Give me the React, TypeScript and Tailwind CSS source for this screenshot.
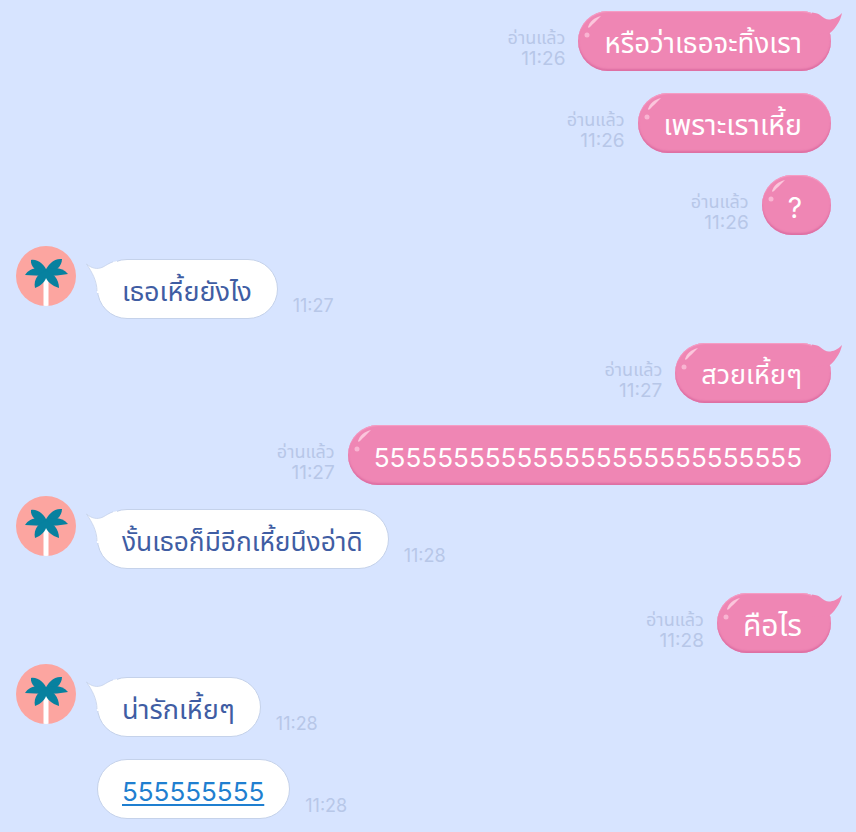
import React from 'react';

const FONT = "font-['Inter','Noto_Sans','Noto_Sans_Thai','DejaVu_Sans',sans-serif]";

const Avatar = () => (
  <svg width="60" height="60" viewBox="0 0 60 60" className="shrink-0">
    <clipPath id="palm-clip">
      <circle cx="30" cy="30" r="30" />
    </clipPath>
    <circle cx="30" cy="30" r="30" fill="#fca5a0" />
    <rect x="27.5" y="30" width="5" height="30" fill="#ffffff" clipPath="url(#palm-clip)" />
    <g fill="#07819f">
      <path d="M32 27 C28 18 22 13 15 14 C14 21 22 28 32 27 Z" />
      <path d="M28 27 C32 18 38 12 46 13 C46 21 38 28 28 27 Z" />
      <path d="M31 26 C24 20 14 21 9 29 C15 29 23 30 30 30 Z" />
      <path d="M29 26 C36 20 46 21 52 28 C45 29 37 30 30 30 Z" />
      <path d="M31 25 C23 26 17 33 19 42 C25 40 30 35 31 29 Z" />
      <path d="M29 25 C37 26 43 33 43 42 C36 40 30 35 29 29 Z" />
    </g>
  </svg>
);

const RightTail = () => (
  <svg width="30" height="24" viewBox="0 0 30 24" className="absolute right-[-11px] top-0">
    <path d="M0 1.500 C4 2 7 3 8 4 C11 6.500 14 8.500 17 8.500 C21 8.500 26 6.500 30 2 C29 8 25 16 18 22 L0 24 Z" fill="#ef86b4" />
  </svg>
);

const LeftTail = () => (
  <svg width="34" height="34" viewBox="0 0 34 34" className="absolute left-[-12px] top-[-1px]">
    <path d="M0.500 5 C5 9 11 11 17 8 C21 6 25 3 31 2 L34 34 L11 34 C11 22 6 13 0.500 5 Z" fill="#ffffff" />
    <path d="M0.500 5 C5 9 11 11 17 8 C20 6.500 23 4 27 2.800" fill="none" stroke="#c5d2ea" strokeWidth="0.8" />
    <path d="M0.500 5 C6 13 11 22 11 32" fill="none" stroke="#c5d2ea" strokeWidth="0.8" />
  </svg>
);

const Gloss = () => (
  <svg width="30" height="32" viewBox="0 0 30 32" className="absolute left-0 top-0">
    <path d="M10 16 C12 10 16 7 23 5 C19 9 15 13 12 16 C11 17 10 17 10 16 Z" fill="#fbc6dc" />
    <circle cx="9" cy="24" r="2.500" fill="#f9b4d2" />
  </svg>
);

const Sent = ({ text, time, tail, mt, size }: { text: string; time: string; tail?: boolean; mt: string; size: string }) => (
  <div className={`flex items-end justify-end pr-[25px] ${mt}`}>
    <div className="mb-[2px] mr-[13px] text-right text-[19px] leading-[21px] text-[#b7c7e8]">
      <div className="text-[18px]">อ่านแล้ว</div>
      <div>{time}</div>
    </div>
    <div className={`relative flex h-[60px] items-center rounded-[30px] bg-[#ef86b4] pl-[26px] pr-[29px] text-white shadow-[inset_0_-2px_2px_#dd6fa3,inset_0_1px_1px_#f6a0c6] ${size}`}>
      {tail && <RightTail />}
      <Gloss />
      <span className="relative pt-[5px]">{text}</span>
    </div>
  </div>
);

const Received = ({
  text,
  time,
  avatar,
  link,
  mt,
  size,
}: {
  text: string;
  time: string;
  avatar?: boolean;
  link?: boolean;
  mt: string;
  size: string;
}) => (
  <div className={`flex items-end pl-[16px] ${mt}`}>
    <div className="w-[81px] shrink-0 self-start">
      {avatar && (
        <div className="-mt-[13px]">
          <Avatar />
        </div>
      )}
    </div>
    <div className={`relative flex h-[60px] items-center rounded-[30px] border border-[#c5d2ea] bg-white pl-[24px] pr-[25px] text-[#3f5da3] ${size}`}>
      {avatar && <LeftTail />}
      {link ? (
        <span className="relative pt-[5px] text-[#1f7fd0] underline underline-offset-[3px]">{text}</span>
      ) : (
        <span className="relative pt-[6px]">{text}</span>
      )}
    </div>
    <div className="mb-[3px] ml-[15px] text-[18px] leading-[21px] text-[#b7c7e8]">{time}</div>
  </div>
);

export default function App() {
  return (
    <div className={`h-[832px] w-[856px] overflow-hidden bg-[#d7e4ff] pt-[11px] ${FONT}`}>
      <Sent text="หรือว่าเธอจะทิ้งเรา" time="11:26" tail mt="mt-0" size="text-[27.7px]" />
      <Sent text="เพราะเราเหี้ย" time="11:26" mt="mt-[22px]" size="text-[28.500px]" />
      <Sent text="?" time="11:26" mt="mt-[22px]" size="text-[28px]" />
      <Received text="เธอเหี้ยยังไง" time="11:27" avatar mt="mt-[24px]" size="text-[27px]" />
      <Sent text="สวยเหี้ยๆ" time="11:27" tail mt="mt-[24px]" size="text-[27px]" />
      <Sent text="555555555555555555555555555" time="11:27" mt="mt-[22px]" size="text-[26.100px]" />
      <Received text="งั้นเธอก็มีอีกเหี้ยนึงอ่าดิ" time="11:28" avatar mt="mt-[24px]" size="text-[26.300px]" />
      <Sent text="คือไร" time="11:28" tail mt="mt-[24px]" size="text-[30px]" />
      <Received text="น่ารักเหี้ยๆ" time="11:28" avatar mt="mt-[24px]" size="text-[27px]" />
      <Received text="555555555" time="11:28" link mt="mt-[22px]" size="text-[26px]" />
    </div>
  );
}
